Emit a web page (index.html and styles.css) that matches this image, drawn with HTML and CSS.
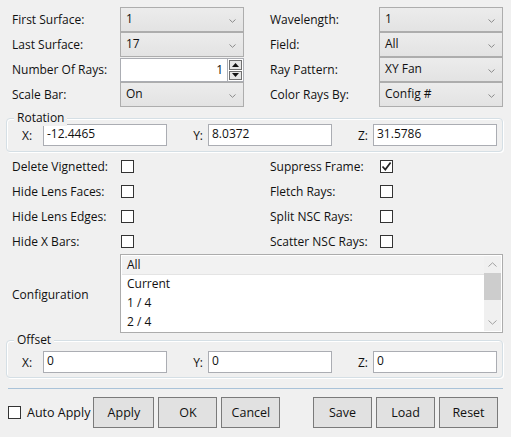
FILE: index.html
```html
<!DOCTYPE html>
<html>
<head>
<meta charset="utf-8">
<link rel="stylesheet" href="styles.css">
</head>
<body>
<div class="dlg">
  <div class="grid top">
    <span class="lbl">First Surface:</span>
    <div class="combo"><span>1</span><svg class="chev" width="7" height="4" viewBox="0 0 7 4"><path d="M0.5 0.5 L3.5 3.3 L6.5 0.5" fill="none" stroke="#8a8a8a" stroke-width="1"/></svg></div>
    <span></span>
    <span class="lbl">Wavelength:</span>
    <div class="combo"><span>1</span><svg class="chev" width="7" height="4" viewBox="0 0 7 4"><path d="M0.5 0.5 L3.5 3.3 L6.5 0.5" fill="none" stroke="#8a8a8a" stroke-width="1"/></svg></div>

    <span class="lbl">Last Surface:</span>
    <div class="combo"><span>17</span><svg class="chev" width="7" height="4" viewBox="0 0 7 4"><path d="M0.5 0.5 L3.5 3.3 L6.5 0.5" fill="none" stroke="#8a8a8a" stroke-width="1"/></svg></div>
    <span></span>
    <span class="lbl">Field:</span>
    <div class="combo"><span>All</span><svg class="chev" width="7" height="4" viewBox="0 0 7 4"><path d="M0.5 0.5 L3.5 3.3 L6.5 0.5" fill="none" stroke="#8a8a8a" stroke-width="1"/></svg></div>

    <span class="lbl">Number Of Rays:</span>
    <div class="spin">
      <div class="spin-input">1</div>
      <div class="spin-btns">
        <div class="sbtn"><svg width="7" height="4" viewBox="0 0 7 4"><path d="M0 4 L3.5 0 L7 4 Z" fill="#111"/></svg></div>
        <div class="sbtn"><svg width="7" height="4" viewBox="0 0 7 4"><path d="M0 0 L3.5 4 L7 0 Z" fill="#111"/></svg></div>
      </div>
    </div>
    <span></span>
    <span class="lbl">Ray Pattern:</span>
    <div class="combo"><span>XY Fan</span><svg class="chev" width="7" height="4" viewBox="0 0 7 4"><path d="M0.5 0.5 L3.5 3.3 L6.5 0.5" fill="none" stroke="#8a8a8a" stroke-width="1"/></svg></div>

    <span class="lbl">Scale Bar:</span>
    <div class="combo"><span>On</span><svg class="chev" width="7" height="4" viewBox="0 0 7 4"><path d="M0.5 0.5 L3.5 3.3 L6.5 0.5" fill="none" stroke="#8a8a8a" stroke-width="1"/></svg></div>
    <span></span>
    <span class="lbl">Color Rays By:</span>
    <div class="combo"><span>Config #</span><svg class="chev" width="7" height="4" viewBox="0 0 7 4"><path d="M0.5 0.5 L3.5 3.3 L6.5 0.5" fill="none" stroke="#8a8a8a" stroke-width="1"/></svg></div>
  </div>

  <div class="group rot">
    <span class="legend">Rotation</span>
    <div class="xyz">
      <span class="axl first">X:</span><div class="tb">-12.4465</div>
      <span class="axl">Y:</span><div class="tb">8.0372</div>
      <span class="axl">Z:</span><div class="tb">31.5786</div>
    </div>
  </div>

  <div class="grid checks">
    <span class="lbl">Delete Vignetted:</span><div class="cbcell"><span class="cb"></span></div><span></span>
    <span class="lbl">Suppress Frame:</span><div class="cbcell"><span class="cb checked"><svg width="11" height="11" viewBox="0 0 11 11"><path d="M1.5 5.5 L4.3 8.6 L9.6 1.6" fill="none" stroke="#222" stroke-width="1.7"/></svg></span></div>

    <span class="lbl">Hide Lens Faces:</span><div class="cbcell"><span class="cb"></span></div><span></span>
    <span class="lbl">Fletch Rays:</span><div class="cbcell"><span class="cb"></span></div>

    <span class="lbl">Hide Lens Edges:</span><div class="cbcell"><span class="cb"></span></div><span></span>
    <span class="lbl">Split NSC Rays:</span><div class="cbcell"><span class="cb"></span></div>

    <span class="lbl">Hide X Bars:</span><div class="cbcell"><span class="cb"></span></div><span></span>
    <span class="lbl">Scatter NSC Rays:</span><div class="cbcell"><span class="cb"></span></div>
  </div>

  <div class="config">
    <span class="lbl">Configuration</span>
    <div class="listbox">
      <div class="items">
        <div class="item sel">All</div>
        <div class="item">Current</div>
        <div class="item">1 / 4</div>
        <div class="item">2 / 4</div>
      </div>
      <div class="vscroll">
        <svg width="9" height="5" viewBox="0 0 9 5"><path d="M0.5 4.5 L4.5 0.8 L8.5 4.5" fill="none" stroke="#a0a0a0" stroke-width="1"/></svg>
        <div class="thumb"></div>
        <div class="track"></div>
        <svg width="9" height="5" viewBox="0 0 9 5"><path d="M0.5 0.5 L4.5 4.2 L8.5 0.5" fill="none" stroke="#a0a0a0" stroke-width="1"/></svg>
      </div>
    </div>
  </div>

  <div class="group off">
    <span class="legend">Offset</span>
    <div class="xyz">
      <span class="axl first">X:</span><div class="tb">0</div>
      <span class="axl">Y:</span><div class="tb">0</div>
      <span class="axl">Z:</span><div class="tb">0</div>
    </div>
  </div>

  <div class="sep"></div>

  <div class="footer">
    <label class="auto"><span class="cb"></span><span>Auto Apply</span></label>
    <div class="btns">
      <button class="btn apply">Apply</button>
      <button class="btn">OK</button>
      <button class="btn">Cancel</button>
    </div>
    <div class="btns right">
      <button class="btn">Save</button>
      <button class="btn">Load</button>
      <button class="btn">Reset</button>
    </div>
  </div>
</div>
</body>
</html>
```

FILE: styles.css
```css
html, body {
  margin: 0;
  padding: 0;
  background: #f0f0f0;
}
body {
  font-family: "Open Sans", "Noto Sans", "DejaVu Sans", sans-serif;
  font-size: 12px;
  color: #111;
}
.dlg {
  width: 511px;
  height: 437px;
  position: relative;
}
.grid {
  display: grid;
  grid-template-columns: 108px 124px 26px 109px 124px;
  padding-left: 12px;
}
.top {
  padding-top: 7px;
  grid-auto-rows: 25px;
}
.lbl {
  display: flex;
  align-items: center;
  white-space: nowrap;
}
.combo {
  box-sizing: border-box;
  height: 25px;
  border: 1px solid #adadad;
  background: linear-gradient(#ececec, #e3e3e3);
  display: flex;
  align-items: flex-start;
  justify-content: space-between;
  padding: 2px 7px 0 5px;
  margin-top: 0;
}
.combo span { line-height: 17px; }
.combo .chev { margin-top: 9px; }

.spin {
  display: flex;
  height: 24px;
  margin-top: 1px;
}
.spin-input {
  box-sizing: border-box;
  flex: 0 0 108px;
  height: 24px;
  border: 1px solid #abadb3;
  background: #fff;
  text-align: right;
  padding: 3px 4px 0 0;
  line-height: 16px;
}
.spin-btns {
  display: flex;
  flex-direction: column;
  width: 16px;
  height: 24px;
  box-sizing: border-box;
  border: 1px solid #abadb3;
  border-left: none;
  background: #fff;
}
.sbtn {
  flex: 1;
  box-sizing: border-box;
  margin: 1px;
  border: 1px solid #707070;
  background: #e6e6e6;
  display: flex;
  align-items: center;
  justify-content: center;
}
.sbtn + .sbtn { margin-top: 0; }

.group {
  position: relative;
  box-sizing: border-box;
  width: 497px;
  margin-left: 6px;
  border: 1px solid #d5dfe5;
  border-radius: 4px;
  box-shadow: inset 1px 1px 0 #fff, 1px 1px 0 #fff;
}
.legend {
  position: absolute;
  left: 7px;
  top: -9px;
  padding: 0 3px;
  background: #f0f0f0;
  line-height: 16px;
}
.rot {
  margin-top: 11px;
  height: 34px;
  padding-top: 5px;
}
.off {
  margin-top: 7px;
  height: 38px;
  padding-top: 10px;
}
.xyz {
  display: grid;
  grid-template-columns: 36px 124px 41px 124px 41px 124px;
}
.axl {
  display: flex;
  align-items: center;
  justify-content: flex-end;
  padding-right: 5px;
}
.axl.first {
  justify-content: flex-start;
  padding-left: 15px;
  padding-right: 0;
}
.tb {
  box-sizing: border-box;
  height: 22px;
  border: 1px solid #abadb3;
  background: #fff;
  padding: 1px 0 0 3px;
  line-height: 16px;
}

.checks {
  margin-top: 2px;
  grid-auto-rows: 25px;
}
.cbcell {
  display: flex;
  align-items: center;
  padding-left: 1px;
}
.cb {
  box-sizing: border-box;
  width: 13px;
  height: 13px;
  border: 1px solid #333;
  background: #fff;
  display: flex;
  align-items: center;
  justify-content: center;
}

.config {
  display: flex;
  padding-left: 12px;
}
.config .lbl {
  width: 108px;
  padding-top: 2px;
}
.listbox {
  box-sizing: border-box;
  width: 383px;
  height: 79px;
  border: 1px solid #acacac;
  background: #fff;
  display: flex;
  padding: 1px;
}
.items {
  flex: 1;
}
.item {
  height: 19px;
  line-height: 18px;
  padding-left: 5px;
}
.item.sel {
  background: #f2f2f2;
  border-bottom: 1px solid #e4e4e4;
  height: 18px;
}
.vscroll {
  width: 17px;
  background: #f0f0f0;
  display: flex;
  flex-direction: column;
  align-items: center;
}
.vscroll svg { margin: 6px 0 6px; flex: none; }
.thumb {
  width: 17px;
  height: 27px;
  background: #cdcdcd;
  flex: none;
}
.track { flex: 1; }

.sep {
  margin: 10px 8px 0 8px;
  width: 495px;
  height: 1px;
  background: #a9c2d8;
}

.footer {
  display: flex;
  align-items: center;
  margin-top: 8px;
  padding-left: 8px;
  width: 498px;
  box-sizing: border-box;
}
.auto {
  display: flex;
  align-items: center;
  gap: 6px;
  font-size: 12.5px;
}
.btns {
  display: flex;
  gap: 4px;
  margin-left: 3px;
}
.btns.right {
  margin-left: auto;
}
.btn {
  box-sizing: border-box;
  width: 59px;
  height: 31px;
  border: 1px solid #7a7a7a;
  background: #e1e1e1;
  font-family: inherit;
  font-size: 12.5px;
  color: #111;
  padding: 0;
  margin: 0;
}
.btn.apply { width: 61px; }
```
